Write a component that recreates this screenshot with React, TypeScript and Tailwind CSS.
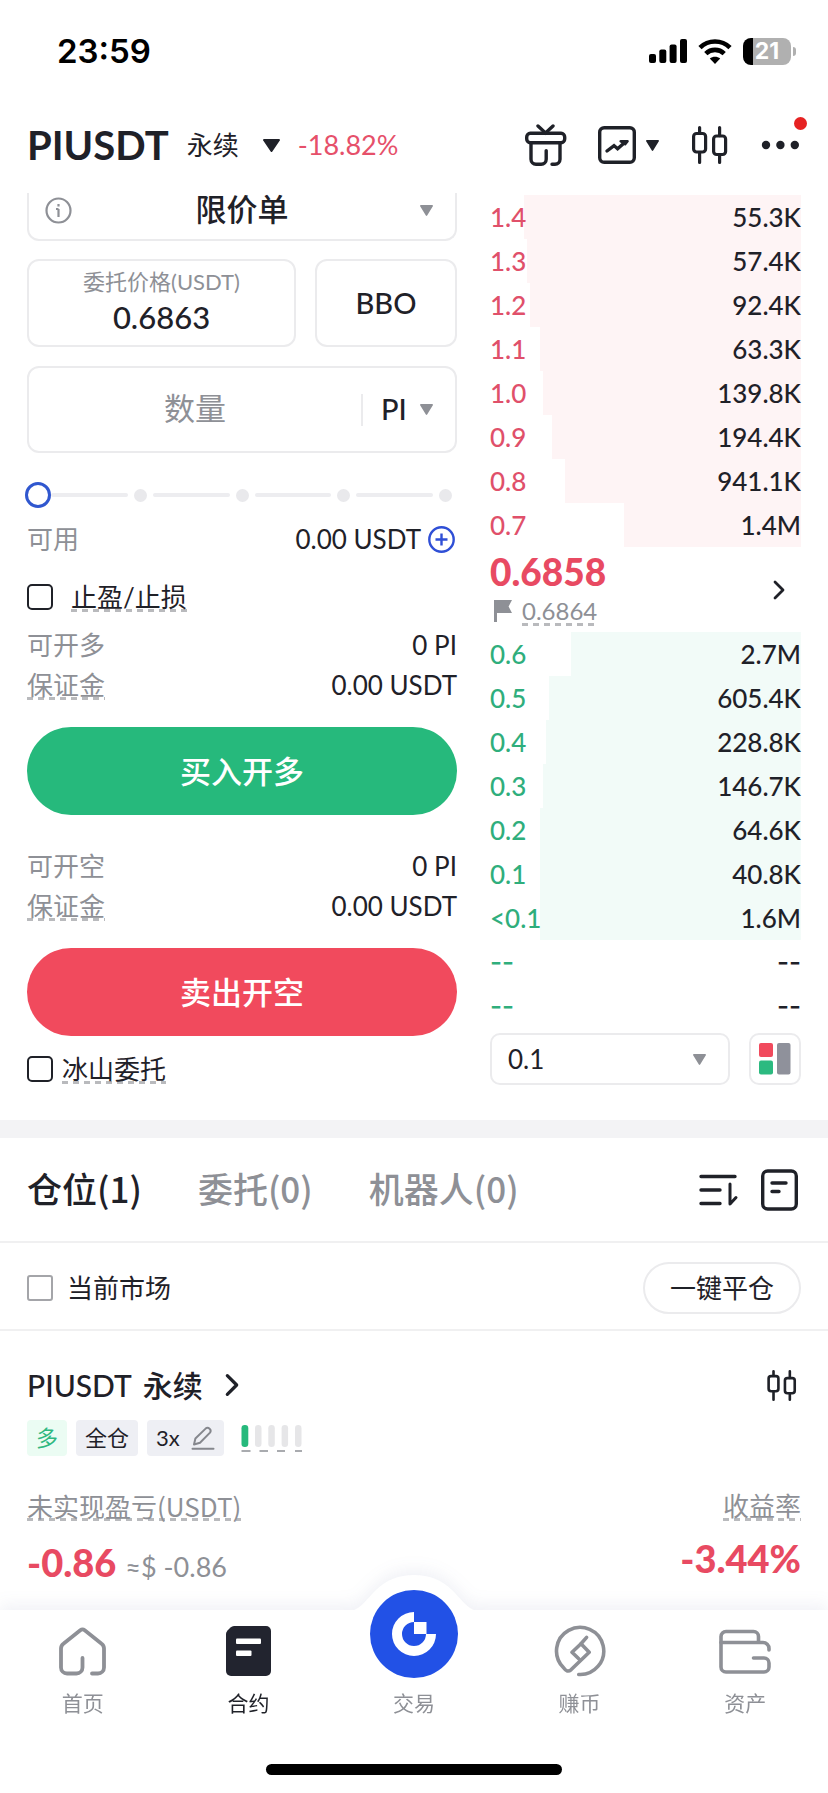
import { useState, type ReactNode } from 'react';
import clsx from 'clsx';

type Row = { price: string; size: string; depth: number };

const asks: Row[] = [
  { price: '1.4', size: '55.3K', depth: 89 },
  { price: '1.3', size: '57.4K', depth: 88 },
  { price: '1.2', size: '92.4K', depth: 87 },
  { price: '1.1', size: '63.3K', depth: 84 },
  { price: '1.0', size: '139.8K', depth: 83 },
  { price: '0.9', size: '194.4K', depth: 80 },
  { price: '0.8', size: '941.1K', depth: 76 },
  { price: '0.7', size: '1.4M', depth: 57 },
];

const bids: Row[] = [
  { price: '0.6', size: '2.7M', depth: 74 },
  { price: '0.5', size: '605.4K', depth: 81 },
  { price: '0.4', size: '228.8K', depth: 82 },
  { price: '0.3', size: '146.7K', depth: 83 },
  { price: '0.2', size: '64.6K', depth: 84 },
  { price: '0.1', size: '40.8K', depth: 84 },
  { price: '<0.1', size: '1.6M', depth: 84 },
  { price: '--', size: '--', depth: 0 },
  { price: '--', size: '--', depth: 0 },
];

const tabs = ['仓位(1)', '委托(0)', '机器人(0)'];

export default function App() {
  return (
    <div className="flex min-h-screen flex-col bg-white font-['Lato','Noto_Sans_CJK_SC',sans-serif] text-[26px] leading-9 text-[#1f2128]">
      <StatusBar />
      <Header />
      <main>
        <div className="grid grid-cols-[430fr_311fr] gap-[33px] px-[27px] pb-[33px]">
          <OrderForm />
          <OrderBook />
        </div>
        <div className="h-[18px] bg-[#f3f3f5]" />
        <Positions />
      </main>
      <BottomNav />
    </div>
  );
}

function StatusBar() {
  return (
    <div className="flex h-[102px] items-center justify-between pr-8 pl-[57px] font-['Inter',sans-serif] text-black">
      <span className="text-[33px] font-semibold">23:59</span>
      <div className="flex items-center gap-[11px]">
        <svg width="38" height="24" viewBox="0 0 38 24" fill="currentColor">
          <rect x="0" y="15" width="7" height="9" rx="2" />
          <rect x="10.3" y="10.5" width="7" height="13.5" rx="2" />
          <rect x="20.6" y="5.5" width="7" height="18.5" rx="2" />
          <rect x="31" y="0" width="7" height="24" rx="2" />
        </svg>
        <svg width="34" height="25" viewBox="0 0 34 25" fill="none" stroke="currentColor" strokeWidth="4.6">
          <path d="M2 8.6C10.3 .4 23.7 .4 32 8.6" />
          <path d="M7.8 14.6C12.9 9.6 21.1 9.6 26.2 14.6" />
          <path d="M17 25L11.8 19.6C14.7 17 19.3 17 22.2 19.6Z" fill="currentColor" stroke="none" />
        </svg>
        <div className="flex items-center gap-[2px]">
          <div className="flex h-[27px] w-[48px] items-center justify-center rounded-lg bg-[linear-gradient(90deg,#000_21%,#b0b0b0_21%)] text-[23px] font-bold text-white">
            21
          </div>
          <div className="h-[9px] w-[3px] rounded-r-full bg-[#b0b0b0]" />
        </div>
      </div>
    </div>
  );
}

function Header() {
  return (
    <header className="flex h-[91px] items-center justify-between px-[27px] pb-[5px]">
      <div className="flex items-center">
        <h1 className="text-[40px] leading-[48px] font-bold">PIUSDT</h1>
        <span className="ml-[18px]">永续</span>
        <button type="button" aria-label="切换合约" className="mr-[14px] ml-5 px-1">
          <Triangle className="h-[13px] w-[17px]" />
        </button>
        <span className="text-[27px] text-[#e6506a]">-18.82%</span>
      </div>
      <div className="flex items-center">
        <button type="button" aria-label="活动">
          <svg width="42" height="42" viewBox="0 0 42 42" fill="none" stroke="currentColor" strokeWidth="3.4" strokeLinecap="round">
            <path d="M13 2l7.5 7L28 2" />
            <rect x="1.7" y="9.3" width="38" height="9.4" rx="3.6" />
            <path d="M6 19v16.2a5 5 0 0 0 5 5h5.2a5 5 0 0 0 5-5V26.6" />
            <path d="M35 19v16.2a5 5 0 0 1-5 5h-3" />
          </svg>
        </button>
        <button type="button" aria-label="图表" className="ml-[31px] flex items-center gap-[10px]">
          <svg width="38" height="38" viewBox="0 0 38 38" fill="none" stroke="currentColor" strokeWidth="3.4" strokeLinecap="round">
            <rect x="1.7" y="1.7" width="34.6" height="34.6" rx="4.5" />
            <path d="M9 25l7-5.4 3.6 3.2 8-7" />
            <path d="M22.6 15.2h7l-2.4 3z" strokeWidth="2.4" strokeLinejoin="round" fill="currentColor" />
          </svg>
          <Triangle className="h-[11px] w-[13px]" />
        </button>
        <button type="button" aria-label="K线" className="ml-[33px]">
          <Candles className="h-[38px] w-9" />
        </button>
        <button type="button" aria-label="更多" className="relative ml-[33px]">
          <svg width="40" height="38" viewBox="0 0 40 38" fill="currentColor">
            <circle cx="5" cy="19" r="4.2" />
            <circle cx="19.4" cy="19" r="4.2" />
            <circle cx="33.8" cy="19" r="4.2" />
          </svg>
          <span className="absolute -top-[9px] -right-[6px] size-[13px] rounded-full bg-[#e62222]" />
        </button>
      </div>
    </header>
  );
}

function OrderForm() {
  const [amount, setAmount] = useState(0);

  return (
    <form className="flex min-w-0 flex-col" onSubmit={(e) => e.preventDefault()}>
      <div className="relative flex h-12 items-center rounded-b-xl border-2 border-t-0 border-[#ebebed] px-4">
        <svg width="27" height="27" viewBox="0 0 27 27" fill="none" stroke="#8e9096" strokeWidth="2.2" className="absolute mb-3">
          <circle cx="13.5" cy="13.5" r="12" />
          <path d="M13.5 12v8M11 12h2.5M13.5 7v2.4" />
        </svg>
        <select aria-label="委托类型" className="mb-[14px] w-full appearance-none text-center text-[31px] leading-10 font-medium [text-align-last:center]">
          <option>限价单</option>
        </select>
        <Triangle className="pointer-events-none absolute right-[22px] mb-3 h-[11px] w-[13px] text-[#8e9096]" />
      </div>

      <div className="mt-[18px] flex gap-[19px]">
        <label className="flex h-[88px] min-w-0 flex-1 flex-col items-center justify-center rounded-xl border-2 border-[#ebebed] pb-[6px]">
          <span className="text-[22px] leading-[34px] text-[#8e9096]">委托价格(USDT)</span>
          <input className="w-full text-center text-[31px] leading-9 font-medium outline-none" defaultValue="0.6863" />
        </label>
        <button type="button" className="h-[88px] w-[142px] rounded-xl border-2 border-[#ebebed] text-[29px] font-medium">
          BBO
        </button>
      </div>

      <div className="mt-[19px] flex h-[87px] items-center rounded-xl border-2 border-[#ebebed]">
        <input
          aria-label="数量"
          placeholder="数量"
          className="min-w-0 flex-1 pb-[3px] text-center text-[31px] leading-10 outline-none placeholder:text-[#8e9096]"
        />
        <div className="relative flex h-8 w-[94px] items-center border-l-2 border-[#ebebed] pl-[18px]">
          <select aria-label="单位" className="w-full appearance-none pb-[2px] text-[29px] leading-10 font-medium">
            <option>PI</option>
          </select>
          <Triangle className="pointer-events-none absolute right-[22px] h-[11px] w-[13px] text-[#8e9096]" />
        </div>
      </div>

      <div className="-mx-[2px] mt-[29px] grid *:col-start-1 *:row-start-1">
        <div className="mr-[7px] ml-5 flex items-center">
          {[25, 50, 75, 100].map((stop) => (
            <div key={stop} className="flex flex-1 items-center">
              <div className="mx-[6px] h-1 flex-1 rounded-full bg-[#ededf0]" />
              <div className="size-[13px] rounded-full bg-[#e9e9ec]" />
            </div>
          ))}
        </div>
        <input
          type="range"
          aria-label="仓位比例"
          value={amount}
          onChange={(e) => setAmount(Number(e.target.value))}
          className="h-[26px] w-full appearance-none bg-transparent [&::-webkit-slider-thumb]:size-[26px] [&::-webkit-slider-thumb]:appearance-none [&::-webkit-slider-thumb]:rounded-full [&::-webkit-slider-thumb]:border-[3px] [&::-webkit-slider-thumb]:border-[#3057cf] [&::-webkit-slider-thumb]:bg-white"
        />
      </div>

      <div className="mt-[13px] flex items-center justify-between pr-[2px]">
        <span className="text-[#8e9096]">可用</span>
        <span className="flex items-center gap-[7px]">
          0.00 USDT
          <button type="button" aria-label="划转">
            <svg width="27" height="27" viewBox="0 0 27 27" fill="none" stroke="#2f4fd6" strokeWidth="2.4">
              <circle cx="13.5" cy="13.5" r="12.2" />
              <path d="M13.5 7.5v12M7.5 13.5h12" />
            </svg>
          </button>
        </span>
      </div>

      <label className="mt-[22px] flex items-center gap-[18px]">
        <Checkbox />
        <Dotted>止盈/止损</Dotted>
      </label>

      <div className="mt-3">
        <Quote label="可开多" />
      </div>
      <button type="button" className="mt-6 h-[88px] rounded-full bg-[#26b97c] text-[31px] leading-10 font-medium text-white">
        买入开多
      </button>

      <div className="mt-[33px]">
        <Quote label="可开空" />
      </div>
      <button type="button" className="mt-6 h-[88px] rounded-full bg-[#f14a5d] text-[31px] leading-10 font-medium text-white">
        卖出开空
      </button>

      <label className="mt-[15px] flex items-center gap-[9px]">
        <Checkbox />
        <Dotted>冰山委托</Dotted>
      </label>
    </form>
  );
}

function Quote({ label }: { label: string }) {
  return (
    <dl className="space-y-1">
      <div className="flex justify-between">
        <dt className="text-[#8e9096]">{label}</dt>
        <dd>0 PI</dd>
      </div>
      <div className="flex justify-between">
        <dt className="text-[#8e9096]">
          <Dotted>保证金</Dotted>
        </dt>
        <dd>0.00 USDT</dd>
      </div>
    </dl>
  );
}

function OrderBook() {
  return (
    <section className="flex min-w-0 flex-col pt-[2px]">
      <DepthTable rows={asks} color="#fef4f5" priceClass="text-[#e0506a]" />
      <div className="flex h-[85px] items-center justify-between pr-4">
        <div>
          <p className="text-[37px] leading-[42px] font-black text-[#e84a62]">0.6858</p>
          <p className="flex items-center gap-2 text-[24px] text-[#8e9096]">
            <svg width="22" height="22" viewBox="0 0 22 22" fill="currentColor" className="ml-[2px]">
              <path d="M2 0h18l-3.4 6.5L20 13H5v9H2z" />
            </svg>
            <Dotted>0.6864</Dotted>
          </p>
        </div>
        <button type="button" aria-label="盘口详情">
          <Chevron className="h-5 w-3" />
        </button>
      </div>
      <DepthTable rows={bids} color="#f2fbf8" priceClass="text-[#2fae7c]" />
      <div className="mt-[5px] flex gap-[19px]">
        <div className="relative flex h-[52px] flex-1 items-center rounded-[10px] border-2 border-[#ebebed] px-4">
          <select aria-label="深度精度" className="w-full appearance-none">
            <option>0.1</option>
          </select>
          <Triangle className="pointer-events-none absolute right-[22px] h-[11px] w-[13px] text-[#8e9096]" />
        </div>
        <button type="button" aria-label="盘口样式" className="flex size-[52px] items-center justify-center rounded-[10px] border-2 border-[#ebebed]">
          <svg width="32" height="32" viewBox="0 0 32 32">
            <rect x="0" y="0" width="14" height="14" rx="2" fill="#f14a5d" />
            <rect x="0" y="17.5" width="14" height="14" rx="2" fill="#2cba80" />
            <rect x="18" y="0" width="13.5" height="31.5" rx="2" fill="#8f919b" />
          </svg>
        </button>
      </div>
    </section>
  );
}

function DepthTable({ rows, color, priceClass }: { rows: Row[]; color: string; priceClass: string }) {
  return (
    <table className="w-full font-medium">
      <tbody>
        {rows.map((row, i) => (
          <tr
            key={i}
            className={clsx('h-11', row.size === '--' && "font-['Inter',sans-serif]")}
            style={{ background: `linear-gradient(to left, ${color} ${row.depth}%, transparent ${row.depth}%)` }}
          >
            <td className={clsx('p-0', priceClass)}>{row.price}</td>
            <td className="p-0 text-right">{row.size}</td>
          </tr>
        ))}
      </tbody>
    </table>
  );
}

function Positions() {
  return (
    <section>
      <div className="flex h-[105px] items-center justify-between border-b-2 border-[#f0f0f1] px-[27px]">
        <div role="tablist" className="flex gap-14 pb-1 font-['Noto_Sans_CJK_SC',sans-serif] text-[35px] leading-[44px]">
          {tabs.map((tab, i) => (
            <button key={tab} type="button" role="tab" aria-selected={i === 0} className={clsx('font-medium', i !== 0 && 'text-[#8e9096]')}>
              {tab}
            </button>
          ))}
        </div>
        <div className="flex items-center gap-[22px]">
          <button type="button" aria-label="排序">
            <svg width="40" height="34" viewBox="0 0 40 34" fill="none" stroke="currentColor" strokeWidth="3.4" strokeLinecap="round" strokeLinejoin="round">
              <path d="M2 3.5h34M2 17h19M2 30.5h19" />
              <path d="M31 11v20l6-6.5" strokeWidth="3" />
            </svg>
          </button>
          <button type="button" aria-label="历史记录">
            <svg width="40" height="42" viewBox="0 0 40 42" fill="none" stroke="currentColor" strokeWidth="3.4" strokeLinecap="round">
              <rect x="1.7" y="2" width="33.6" height="38" rx="5" />
              <path d="M11 14h14M11 22.5h7" />
            </svg>
          </button>
        </div>
      </div>

      <div className="flex h-[88px] items-center justify-between border-b-2 border-[#f0f0f1] px-[27px] pt-[3px]">
        <label className="flex items-center gap-[14px]">
          <input type="checkbox" className="size-[26px] appearance-none rounded-[3px] border-2 border-[#a4a5a9]" />
          当前市场
        </label>
        <button type="button" className="h-[52px] rounded-full border-2 border-[#ebebed] px-[25px]">
          一键平仓
        </button>
      </div>

      <article className="px-[27px] pt-[34px] pb-[21px]">
        <div className="flex items-center justify-between">
          <a href="#position" className="flex items-center text-[30px] leading-10 font-medium">
            PIUSDT
            <span className="ml-[11px]">永续</span>
            <Chevron className="ml-[22px] h-6 w-[14px]" />
          </a>
          <button type="button" aria-label="K线" className="pr-1">
            <Candles className="h-[31px] w-[30px]" />
          </button>
        </div>

        <div className="mt-[15px] flex items-center gap-[9px] text-[22px]">
          <span className="rounded-[4px] bg-[#ebfcf3] px-[9px] text-[#2fb880]">多</span>
          <span className="rounded-[4px] bg-[#eeeff4] px-[9px]">全仓</span>
          <button type="button" className="flex items-center gap-[11px] rounded-[4px] bg-[#eeeff4] px-[9px]">
            3x
            <svg width="24" height="24" viewBox="0 0 24 24" fill="none" stroke="#85878d" strokeWidth="2" strokeLinecap="round" strokeLinejoin="round">
              <path d="M3 18.5l1.4-6L14.6 2.6a3 3 0 0 1 4.4 4L9 16.7zM1.5 22.8h21" />
            </svg>
          </button>
          <svg width="62" height="30" viewBox="0 0 62 30" className="ml-2">
            <g fill="#e6e6e8">
              <rect x="14" y="2" width="6.5" height="22" rx="3.2" />
              <rect x="27.3" y="2" width="6.5" height="22" rx="3.2" />
              <rect x="40.6" y="2" width="6.5" height="22" rx="3.2" />
              <rect x="54" y="2" width="6.5" height="22" rx="3.2" />
            </g>
            <rect x=".5" y="2" width="6.8" height="22" rx="3.2" fill="#26b97c" />
            <path d="M.5 28h9M18.5 28h8.5M36 28h8M54 28h7" stroke="#a9abaf" strokeWidth="1.8" />
          </svg>
        </div>

        <div className="mt-8 flex justify-between">
          <div>
            <div className="font-['Noto_Sans_CJK_SC',sans-serif] text-[#8e9096]">
              <Dotted>未实现盈亏(USDT)</Dotted>
            </div>
            <p className="mt-4 flex items-baseline gap-[9px] leading-[44px]">
              <span className="text-[38px] font-black text-[#e84a62]">-0.86</span>
              <span className="text-[27px] text-[#8e9096]">≈$ -0.86</span>
            </p>
          </div>
          <div className="text-right">
            <div className="text-[#8e9096]">
              <Dotted>收益率</Dotted>
            </div>
            <p className="mt-3 text-[38px] leading-[44px] font-black text-[#e84a62]">-3.44%</p>
          </div>
        </div>
      </article>
    </section>
  );
}

function BottomNav() {
  return (
    <nav className="relative mt-auto bg-white text-[21px] leading-[30px] text-[#8e9096] drop-shadow-[0_-5px_8px_rgba(60,80,140,0.08)]">
      <svg width="124" height="37" viewBox="0 0 124 37" fill="#fff" className="absolute -top-[35px] left-1/2 -translate-x-1/2">
        <path d="M0 37V36C9 33 15 24 24 15 34 5 47 0 62 0S90 5 100 15C109 24 115 33 124 36V37Z" />
      </svg>
      <div className="relative grid grid-cols-5 pt-[14px]">
        <NavItem label="首页">
          <svg width="47" height="49" viewBox="0 0 47 49" fill="none" stroke="currentColor" strokeWidth="3.8" strokeLinecap="round" strokeLinejoin="round">
            <path d="M23.5 31v9.5a6 6 0 0 1-6 6H8a6 6 0 0 1-6-6V21.5a6 6 0 0 1 2.4-4.8L21.3 3.2a3.6 3.6 0 0 1 4.4 0l16.9 13.5a6 6 0 0 1 2.4 4.8v19a6 6 0 0 1-6 6h-6" />
          </svg>
        </NavItem>
        <NavItem label="合约" active>
          <svg width="45" height="50" viewBox="0 0 45 50">
            <path d="M8 0h32a5 5 0 0 1 5 5v40a5 5 0 0 1-5 5H5a5 5 0 0 1-5-5V8q0-2 1.5-3.5l3-3Q6 0 8 0z" fill="#22242f" />
            <rect x="10" y="12.5" width="25" height="5.5" rx="1" fill="#fff" />
            <rect x="10" y="24.5" width="15.5" height="5.5" rx="1" fill="#fff" />
          </svg>
        </NavItem>
        <NavItem label="交易">
          <svg width="88" height="88" viewBox="0 0 88 88" className="shrink-0">
            <circle cx="44" cy="44" r="44" fill="#2251e6" />
            <path d="M44 22v10a12 12 0 1 0 12 12h10a22 22 0 1 1-22-22z" fill="#fff" />
            <path d="M44 32h12.5v12H44z" fill="#fff" />
          </svg>
        </NavItem>
        <NavItem label="赚币">
          <svg width="52" height="52" viewBox="0 0 52 52" fill="none" stroke="currentColor" strokeWidth="3.6" strokeLinecap="round" strokeLinejoin="round">
            <path d="M24.7 49.5A23.6 23.6 0 1 0 9.6 42.8Q13.2 48 17 44.8L35.2 27.2 27 18.8 18 27.2 24.5 33.5" />
            <path d="M27 18.8L32.6 12.4" />
          </svg>
        </NavItem>
        <NavItem label="资产">
          <svg width="52" height="45" viewBox="0 0 52 45" fill="none" stroke="currentColor" strokeWidth="3.6" strokeLinecap="round">
            <path d="M39.5 12V7.5a5 5 0 0 0-5-5H7a5 5 0 0 0-5 5V38a5 5 0 0 0 5 5h38a5 5 0 0 0 5-5v-4a5 5 0 0 0-5-5H34.5" />
            <path d="M2 13.5h42a6 6 0 0 1 6 6v1.5" />
          </svg>
        </NavItem>
      </div>
      <div className="mx-auto mt-[46px] h-[11px] w-[296px] rounded-full bg-black" />
      <div className="h-[18px]" />
    </nav>
  );
}

function NavItem({ label, active, children }: { label: string; active?: boolean; children: ReactNode }) {
  return (
    <a href="#nav" className={clsx('flex flex-col items-center', active && 'text-[#1f2128]')}>
      <span className={clsx('flex h-[54px]', label === '交易' ? 'items-end' : 'items-center')}>{children}</span>
      <span className="mt-[10px]">{label}</span>
    </a>
  );
}

function Checkbox() {
  return <input type="checkbox" className="size-[26px] appearance-none rounded-[5px] border-2 border-[#1f2128]" />;
}

// label with the dashed "tap for help" underline
function Dotted({ children }: { children: ReactNode }) {
  return (
    <span className="inline-block bg-[repeating-linear-gradient(90deg,#b9babd_0_6px,transparent_6px_11px)] bg-[length:100%_3px] bg-[position:0_30px] bg-no-repeat align-top">
      {children}
    </span>
  );
}

function Triangle({ className }: { className?: string }) {
  return (
    <svg viewBox="0 0 16 13" preserveAspectRatio="none" fill="currentColor" className={className}>
      <path d="M1 0h14a1 1 0 0 1 .8 1.6l-7 10.8a1 1 0 0 1-1.6 0l-7-10.8A1 1 0 0 1 1 0z" />
    </svg>
  );
}

function Chevron({ className }: { className?: string }) {
  return (
    <svg viewBox="0 0 12 20" fill="none" stroke="currentColor" strokeWidth="2.8" strokeLinecap="round" strokeLinejoin="round" className={className}>
      <path d="M2 2l8 8-8 8" />
    </svg>
  );
}

function Candles({ className }: { className?: string }) {
  return (
    <svg viewBox="0 0 36 38" fill="none" stroke="currentColor" strokeWidth="3.2" strokeLinecap="round" className={className}>
      <rect x="1.6" y="7.5" width="12" height="18.5" rx="3" />
      <rect x="21.6" y="10" width="12" height="18.5" rx="3" />
      <path d="M7.6 1.6v5M7.6 26.5v9.9M27.6 1.6v8M27.6 29v7.4" />
    </svg>
  );
}
